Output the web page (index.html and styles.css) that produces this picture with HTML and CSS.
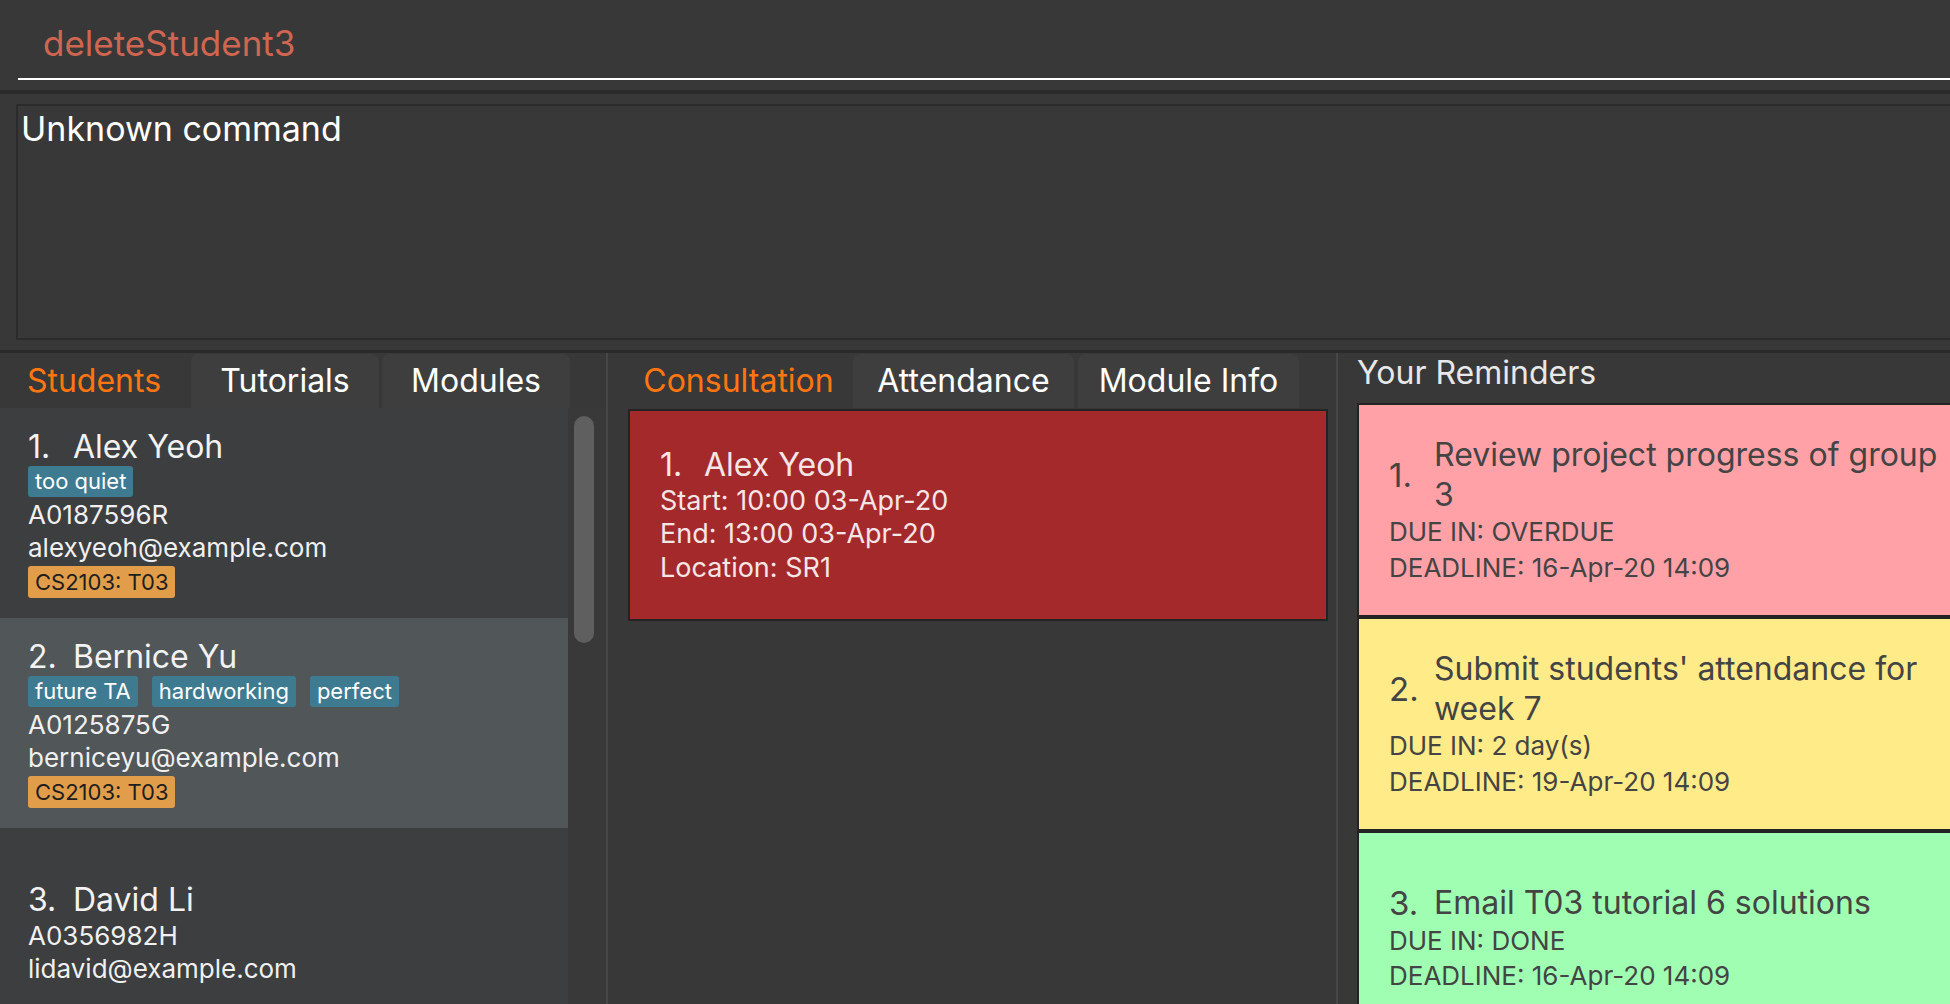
FILE: index.html
```html
<!DOCTYPE html>
<html lang="en">
<head>
<meta charset="utf-8">
<title>TA Tracker</title>
<link rel="stylesheet" href="styles.css">
</head>
<body>
<div class="app">
  <div class="command-box">
    <div class="command-field error">deleteStudent3</div>
  </div>
  <div class="band band-a"></div>
  <div class="result-area">
    <div class="result-box">Unknown command</div>
  </div>
  <div class="band band-b"></div>
  <div class="panels">
    <section class="panel panel-left">
      <div class="tab-header">
        <div class="tab tab-left selected">Students</div>
        <div class="tab tab-left">Tutorials</div>
        <div class="tab tab-left">Modules</div>
      </div>
      <div class="list-wrap">
        <div class="list">
          <div class="student even">
            <div class="name-line"><span class="idx">1.</span>Alex Yeoh</div>
            <div class="tags"><span class="tag">too quiet</span></div>
            <div class="detail">A0187596R</div>
            <div class="detail">alexyeoh@example.com</div>
            <div class="mods"><span class="mod">CS2103: T03</span></div>
          </div>
          <div class="student odd">
            <div class="name-line"><span class="idx">2.</span>Bernice Yu</div>
            <div class="tags"><span class="tag">future TA</span><span class="tag">hardworking</span><span class="tag">perfect</span></div>
            <div class="detail">A0125875G</div>
            <div class="detail">berniceyu@example.com</div>
            <div class="mods"><span class="mod">CS2103: T03</span></div>
          </div>
          <div class="student even">
            <div class="name-line"><span class="idx">3.</span>David Li</div>
            <div class="detail">A0356982H</div>
            <div class="detail">lidavid@example.com</div>
          </div>
        </div>
        <div class="scroll-col"><div class="thumb"></div></div>
      </div>
    </section>
    <div class="divider"></div>
    <section class="panel panel-mid">
      <div class="tab-header tab-header-mid">
        <div class="tab tab-mid selected">Consultation</div>
        <div class="tab tab-mid">Attendance</div>
        <div class="tab tab-mid">Module Info</div>
      </div>
      <div class="consult-list">
        <div class="consult-card">
          <div class="name-line"><span class="idx idx-c">1.</span>Alex Yeoh</div>
          <div class="c-detail">Start: 10:00 03-Apr-20</div>
          <div class="c-detail">End: 13:00 03-Apr-20</div>
          <div class="c-detail">Location: SR1</div>
        </div>
      </div>
    </section>
    <div class="divider"></div>
    <section class="panel panel-right">
      <div class="rem-header">Your Reminders</div>
      <div class="rem-list">
        <div class="rem-card overdue">
          <div class="rem-row"><span class="rem-idx">1.</span><span class="rem-title">Review project progress of group 3</span></div>
          <div class="rem-detail">DUE IN: OVERDUE</div>
          <div class="rem-detail">DEADLINE: 16-Apr-20 14:09</div>
        </div>
        <div class="rem-card soon">
          <div class="rem-row"><span class="rem-idx">2.</span><span class="rem-title">Submit students' attendance for week 7</span></div>
          <div class="rem-detail">DUE IN: 2 day(s)</div>
          <div class="rem-detail">DEADLINE: 19-Apr-20 14:09</div>
        </div>
        <div class="rem-card done">
          <div class="rem-row"><span class="rem-idx">3.</span><span class="rem-title">Email T03 tutorial 6 solutions</span></div>
          <div class="rem-detail">DUE IN: DONE</div>
          <div class="rem-detail">DEADLINE: 16-Apr-20 14:09</div>
        </div>
      </div>
    </section>
  </div>
</div>
</body>
</html>
```
FILE: styles.css
```css
* { box-sizing: border-box; }
html, body {
  margin: 0;
  padding: 0;
  background: #383838;
  overflow: hidden;
}
body {
  width: 1950px;
  height: 1004px;
  font-family: Inter, "Liberation Sans", sans-serif;
  color: #f0f0f0;
}
.app {
  display: flex;
  flex-direction: column;
  height: 1004px;
}
.command-box {
  height: 90px;
  padding-left: 18px;
}
.command-field {
  height: 80px;
  border-bottom: 2px solid #ffffff;
  padding: 22px 0 0 25px;
  font-size: 35px;
  line-height: 42px;
}
.error { color: #d06651; }
.band { background: #2a2a2a; }
.band-a { height: 4px; }
.band-b { height: 3px; }
.result-area {
  height: 256px;
  padding: 10px 0 10px 16px;
}
.result-box {
  height: 236px;
  border: 2px solid #2b2b2b;
  border-right: none;
  padding: 2px 0 0 3px;
  font-size: 34px;
  line-height: 42px;
  color: #ffffff;
}
.panels {
  flex: 1;
  display: flex;
  min-height: 0;
}
.panel { overflow: hidden; }
.panel-left { width: 606px; flex: none; }
.panel-mid { width: 728px; flex: none; }
.panel-right { flex: 1; }
.divider {
  width: 2px;
  flex: none;
  background: #474747;
}
.tab-header {
  display: flex;
  gap: 3px;
  height: 55px;
  padding-top: 1px;
}
.tab {
  height: 54px;
  padding-top: 7px;
  font-size: 32px;
  line-height: 40px;
  text-align: center;
  color: #ffffff;
  background: #3e3e3e;
  border-radius: 7px 7px 0 0;
}
.tab.selected {
  background: transparent;
  color: #ff7610;
}
.tab-left { width: 188px; }
.tab-header-mid { padding-left: 20px; gap: 4px; }
.tab-mid { width: 221px; }
.list-wrap {
  display: flex;
  height: 600px;
}
.list {
  width: 568px;
  flex: none;
}
.scroll-col {
  flex: 1;
  padding: 8px 0 0 6px;
  background: #393939;
}
.thumb {
  width: 20px;
  height: 227px;
  border-radius: 10px;
  background: #5f5f5f;
}
.student {
  height: 210px;
  display: flex;
  flex-direction: column;
  justify-content: center;
  padding-left: 28px;
}
.even { background: #3c3e3f; }
.odd { background: #515658; }
.name-line {
  font-size: 32px;
  line-height: 38px;
  color: #f2f2f2;
  white-space: nowrap;
}
.idx {
  display: inline-block;
  width: 45px;
}
.idx-c { width: 44px; }
.tags {
  display: flex;
  gap: 14px;
  height: 32px;
}
.tag {
  height: 31px;
  padding: 0 7px;
  font-size: 22px;
  line-height: 31px;
  color: #ffffff;
  background: #3e7b91;
  border-radius: 3px;
}
.detail {
  font-size: 26px;
  line-height: 33px;
  color: #f0f0f0;
}
.mods {
  display: flex;
  margin-top: 2px;
  height: 32px;
}
.mod {
  height: 32px;
  padding: 0 7px;
  font-size: 22px;
  line-height: 32px;
  color: #1e1e1e;
  background: #e29d4a;
  border-radius: 3px;
}
.consult-list {
  padding: 1px 8px 0 20px;
}
.consult-card {
  height: 212px;
  border: 2px solid #232323;
  background: #a4292b;
  padding-left: 30px;
  display: flex;
  flex-direction: column;
  justify-content: center;
}
.consult-card .name-line { color: #f5e6e6; }
.c-detail {
  font-size: 27px;
  line-height: 33.5px;
  color: #f5e6e6;
}
.rem-header {
  padding: 1px 0 0 19px;
  height: 50px;
  font-size: 32px;
  line-height: 38px;
  color: #e8e8e8;
}
.rem-list {
  padding-left: 19px;
  width: 660px;
}
.rem-card {
  height: 214px;
  width: 620px;
  border: 2px solid #232323;
  padding: 0 19px 0 30px;
  display: flex;
  flex-direction: column;
  justify-content: center;
  color: #444444;
}
.overdue { background: #ffa1a6; }
.soon { background: #ffeb88; }
.done { background: #9ffeb1; }
.rem-row {
  display: flex;
  align-items: center;
}
.rem-idx {
  flex: none;
  width: 45px;
  font-size: 33px;
  line-height: 40px;
}
.rem-title {
  flex: 1;
  font-size: 32px;
  line-height: 39.5px;
}
.rem-detail {
  font-size: 26px;
  line-height: 35.5px;
}
```
